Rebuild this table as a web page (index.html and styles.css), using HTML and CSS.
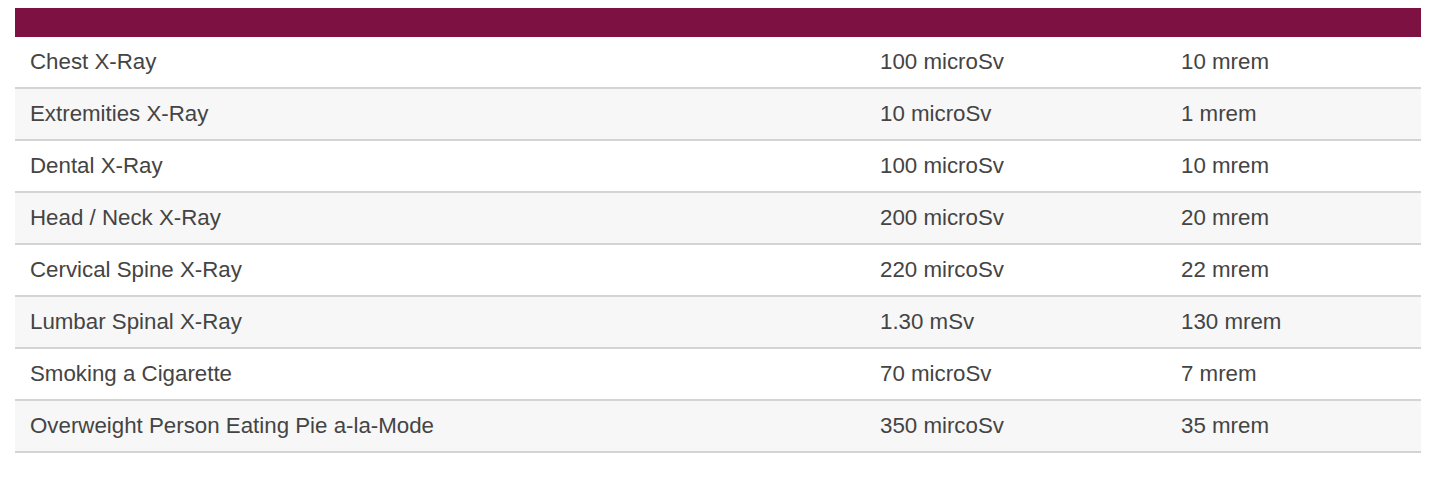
FILE: index.html
```html
<!DOCTYPE html>
<html>
<head>
<meta charset="utf-8">
<link rel="stylesheet" href="styles.css">
</head>
<body>
<table class="dose-table">
  <thead>
    <tr><th class="c1"></th><th class="c2"></th><th class="c3"></th></tr>
  </thead>
  <tbody>
    <tr><td>Chest X-Ray</td><td>100 microSv</td><td>10 mrem</td></tr>
    <tr><td>Extremities X-Ray</td><td>10 microSv</td><td>1 mrem</td></tr>
    <tr><td>Dental X-Ray</td><td>100 microSv</td><td>10 mrem</td></tr>
    <tr><td>Head / Neck X-Ray</td><td>200 microSv</td><td>20 mrem</td></tr>
    <tr><td>Cervical Spine X-Ray</td><td>220 mircoSv</td><td>22 mrem</td></tr>
    <tr><td>Lumbar Spinal X-Ray</td><td>1.30 mSv</td><td>130 mrem</td></tr>
    <tr><td>Smoking a Cigarette</td><td>70 microSv</td><td>7 mrem</td></tr>
    <tr><td>Overweight Person Eating Pie a-la-Mode</td><td>350 mircoSv</td><td>35 mrem</td></tr>
  </tbody>
</table>
</body>
</html>
```
FILE: styles.css
```css
html, body {
  margin: 0;
  padding: 0;
  background: #ffffff;
}
body {
  padding: 8px 9px 0 15px;
  font-family: "Liberation Sans", Arial, sans-serif;
}
.dose-table {
  width: 1406px;
  border-collapse: collapse;
  table-layout: fixed;
  font-size: 22.3px;
  color: #444444;
}
.dose-table thead th {
  background: #7d1142;
  height: 29px;
  padding: 0;
}
.dose-table .c1 { width: 850px; }
.dose-table .c2 { width: 301px; }
.dose-table .c3 { width: 255px; }
.dose-table td {
  height: 50px;
  padding: 0 0 0 15px;
  border-bottom: 2px solid #d4d4d4;
  text-align: left;
  vertical-align: middle;
}
.dose-table tbody tr:nth-child(even) td {
  background: #f7f7f7;
}
```
